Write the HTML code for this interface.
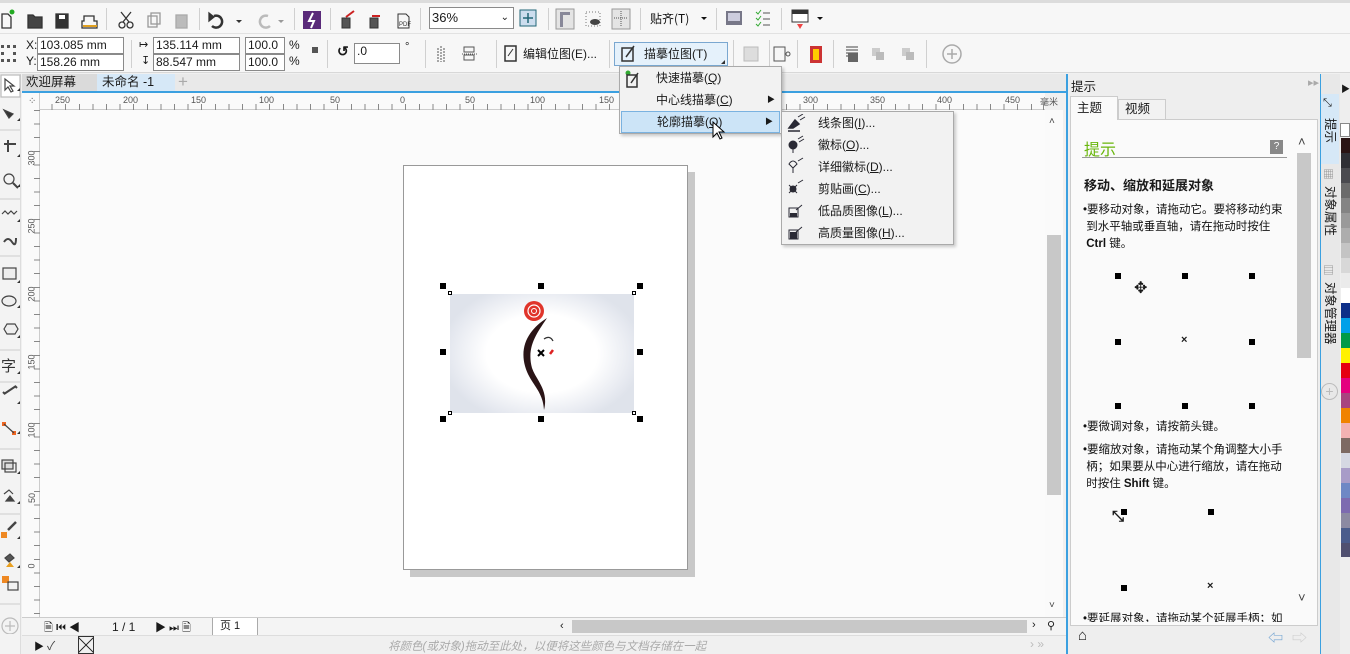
<!DOCTYPE html>
<html><head><meta charset="utf-8"><style>
*{box-sizing:border-box;margin:0;padding:0}
body{width:1350px;height:654px;overflow:hidden;background:#f0f0f0;font-family:"Liberation Sans","Noto Sans CJK SC",sans-serif;font-size:12px;color:#1a1a1a;position:relative}
.a{position:absolute}
.sep{position:absolute;width:1px;background:#d0d0d0}
.inp{position:absolute;background:#fff;border:1px solid #8a8a8a;height:17px;font-size:12px;line-height:15px;padding-left:2px}
.sq{position:absolute;width:6px;height:6px;background:#000}
.rt{position:absolute;font-size:9px;color:#555}
.vt{position:absolute;font-size:9px;color:#555;transform:rotate(-90deg);transform-origin:center}
.mi{position:absolute;left:0;width:100%;height:22px;line-height:22px;font-size:12px}
.sw{position:absolute;left:1341px;width:9px;height:15px}
.ht{position:absolute;font-size:11.5px;line-height:17px;color:#111}
.vtab{position:absolute;left:1322px;width:16px;font-size:12.5px;writing-mode:vertical-rl;text-orientation:sideways;line-height:16px}
</style></head><body>
<div class="a" style="left:0;top:0;width:1350px;height:3px;background:#dcdcdc"></div>
<div class="a" style="left:0;top:3px;width:1350px;height:31px;background:#f7f7f7;border-bottom:1px solid #e2e2e2"></div>
<div class="a" style="left:0;top:34px;width:1350px;height:39px;background:#f7f7f7;border-bottom:1px solid #d8d8d8"></div>
<svg class="a" style="left:0;top:6px" width="850" height="26">
<g fill="none" stroke="#333" stroke-width="1.3">
<path d="M2 8h6l3 3v11H2z"/><circle cx="12" cy="6" r="2.5" fill="#2a2" stroke="none"/>
<path d="M28 9h5l2 2h7v11H28z" fill="#444"/>
<rect x="56" y="8" width="12" height="14" fill="#333"/><rect x="59" y="9" width="6" height="4" fill="#fff" stroke="none"/>
<path d="M84 10h10v5h3v7H82v-7h2z"/><path d="M83 20h14" stroke="#e0a020" stroke-width="2"/>
<circle cx="122" cy="19" r="3"/><circle cx="130" cy="19" r="3"/><path d="M123 16l8-10M129 16l-8-10"/>
<rect x="148" y="10" width="9" height="11" stroke="#999"/><rect x="151" y="7" width="9" height="11" stroke="#999"/>
<rect x="176" y="9" width="11" height="13" fill="#bbb" stroke="#aaa"/>
<path d="M214 10a6 6 0 1 1 -2 10" stroke-width="2.5"/><path d="M209 7l5 4 -5 4z" fill="#333"/>
<path d="M236 14l3 3 3-3z" fill="#333" stroke="none"/>
<path d="M268 10a6 6 0 1 0 2 10" stroke="#bbb" stroke-width="2.5"/><path d="M278 14l3 3 3-3z" fill="#999" stroke="none"/>
</g>
<rect x="303" y="5" width="18" height="18" fill="#5a2a7a"/><path d="M313 7l-4 8h5l-3 7" stroke="#fff" stroke-width="2" fill="none"/>
<g stroke="#333" fill="none"><rect x="342" y="12" width="8" height="10" fill="#555"/><path d="M346 11l8-6" stroke="#c22" stroke-width="2"/>
<rect x="370" y="12" width="8" height="10" fill="#555"/><path d="M372 10h8" stroke="#c22" stroke-width="2"/>
<path d="M398 8h8l3 3v11h-11z"/><text x="399" y="20" font-size="6" fill="#333" stroke="none">PDF</text></g>
</svg>
<div class="sep" style="left:106px;top:8px;height:22px"></div>
<div class="sep" style="left:199px;top:8px;height:22px"></div>
<div class="sep" style="left:294px;top:8px;height:22px"></div>
<div class="sep" style="left:330px;top:8px;height:22px"></div>
<div class="sep" style="left:420px;top:8px;height:22px"></div>
<div class="inp" style="left:429px;top:7px;width:85px;height:22px;line-height:20px;font-size:13px">36%<span style="position:absolute;right:4px;top:0;font-size:10px">&#8964;</span></div>
<svg class="a" style="left:518px;top:8px" width="330" height="24">
<rect x="2" y="2" width="16" height="16" fill="#cde" stroke="#267"/><path d="M10 5v10M5 10h10" stroke="#267" stroke-width="1.5"/>
<rect x="38" y="1" width="18" height="20" fill="#e4e4e4" stroke="#999"/><path d="M42 4h10v3h-7v12h-3z" fill="#889"/>
<rect x="68" y="4" width="14" height="14" fill="none" stroke="#777" stroke-dasharray="1 2"/><ellipse cx="77" cy="14" rx="5" ry="3" fill="#444"/>
<rect x="94" y="1" width="18" height="20" fill="#e4e4e4" stroke="#999"/><path d="M103 3v16M96 10h14" stroke="#555" stroke-dasharray="1 1"/>
<text x="132" y="15" font-size="12" fill="#111" font-family="Noto Sans CJK SC">贴齐(T)</text><path d="M183 9l3 3 3-3z" fill="#111"/>
<rect x="208" y="3" width="16" height="14" fill="#778" /><rect x="210" y="5" width="12" height="8" fill="#ccd"/>
<path d="M238 4l2 2 3-4M238 10l2 2 3-4M238 16l2 2 3-4" stroke="#3a3" fill="none"/><path d="M245 5h7M245 11h7M245 17h7" stroke="#555"/>
<rect x="274" y="2" width="16" height="12" fill="#fff" stroke="#333"/><rect x="274" y="2" width="16" height="4" fill="#333"/><path d="M279 16l3 5 3-5z" fill="#e44"/><path d="M299 9l3 3 3-3z" fill="#111"/>
</svg>
<div class="sep" style="left:548px;top:8px;height:22px"></div>
<div class="sep" style="left:640px;top:8px;height:22px"></div>
<div class="sep" style="left:716px;top:8px;height:22px"></div>
<div class="sep" style="left:781px;top:8px;height:22px"></div>
<svg class="a" style="left:0;top:42px" width="24" height="24"><g fill="#555"><rect x="1" y="3" width="3" height="3"/><rect x="7" y="3" width="3" height="3"/><rect x="13" y="3" width="3" height="3"/><rect x="1" y="10" width="3" height="3"/><rect x="13" y="10" width="3" height="3"/><rect x="1" y="17" width="3" height="3"/><rect x="7" y="17" width="3" height="3"/><rect x="13" y="17" width="3" height="3"/></g></svg>
<div class="a" style="left:26px;top:38px;font-size:12px">X:</div><div class="a" style="left:26px;top:54px;font-size:12px">Y:</div>
<div class="inp" style="left:37px;top:37px;width:87px">103.085 mm</div>
<div class="inp" style="left:37px;top:54px;width:87px">158.26 mm</div>
<div class="sep" style="left:131px;top:40px;height:28px"></div>
<div class="a" style="left:139px;top:38px;font-size:11px">&#8614;</div><div class="a" style="left:141px;top:54px;font-size:11px">&#8615;</div>
<div class="inp" style="left:153px;top:37px;width:87px">135.114 mm</div>
<div class="inp" style="left:153px;top:54px;width:87px">88.547 mm</div>
<div class="inp" style="left:245px;top:37px;width:40px">100.0</div>
<div class="inp" style="left:245px;top:54px;width:40px">100.0</div>
<div class="a" style="left:289px;top:38px">%</div><div class="a" style="left:289px;top:54px">%</div>
<div class="a" style="left:312px;top:47px;width:6px;height:6px;background:#555"></div>
<div class="sep" style="left:327px;top:40px;height:28px"></div>
<div class="a" style="left:337px;top:43px;font-size:14px;font-weight:bold">&#8634;</div>
<div class="inp" style="left:354px;top:43px;width:46px;height:21px">.0</div>
<div class="a" style="left:405px;top:41px;font-size:11px">°</div>
<div class="sep" style="left:425px;top:40px;height:28px"></div>
<svg class="a" style="left:436px;top:44px" width="60" height="20"><path d="M2 4v14M8 4v14M5 2v16" stroke="#555" stroke-dasharray="2 1"/><rect x="28" y="3" width="10" height="5" fill="none" stroke="#555"/><rect x="28" y="11" width="10" height="5" fill="none" stroke="#555"/><path d="M26 10h16" stroke="#555" stroke-dasharray="1 1"/></svg>
<div class="sep" style="left:496px;top:40px;height:28px"></div>
<svg class="a" style="left:503px;top:44px" width="16" height="20"><rect x="2" y="2" width="11" height="15" fill="none" stroke="#333" stroke-width="1.5"/><path d="M5 12l5-7" stroke="#333"/></svg>
<div class="a" style="left:523px;top:45px;font-size:12px">编辑位图(E)...</div>
<div class="sep" style="left:609px;top:40px;height:28px"></div>
<div class="a" style="left:614px;top:42px;width:114px;height:24px;background:#e5f1fb;border:1px solid #7aa7d0"></div>
<svg class="a" style="left:620px;top:44px" width="18" height="20"><rect x="2" y="4" width="11" height="13" fill="none" stroke="#333" stroke-width="1.5"/><path d="M6 13l8-11" stroke="#333" stroke-width="1.5"/></svg>
<div class="a" style="left:644px;top:45px;font-size:12px">描摹位图(T)</div>
<div class="a" style="left:721px;top:60px;width:0;height:0;border-left:4px solid transparent;border-bottom:4px solid #333"></div>
<div class="sep" style="left:733px;top:40px;height:28px"></div>
<svg class="a" style="left:742px;top:44px" width="240" height="22">
<rect x="2" y="3" width="14" height="14" fill="#ddd" stroke="#bbb"/>
<rect x="32" y="3" width="11" height="14" fill="none" stroke="#555"/><circle cx="46" cy="10" r="2" fill="none" stroke="#555"/>
<rect x="68" y="2" width="12" height="17" fill="#c33"/><rect x="71" y="5" width="6" height="11" fill="#fc0"/>
<path d="M104 3h12M104 6h12M104 9h12M104 12h12" stroke="#444"/><rect x="106" y="9" width="10" height="9" fill="#666"/>
<rect x="130" y="4" width="8" height="8" fill="#ccc"/><rect x="134" y="8" width="8" height="8" fill="#bbb"/>
<rect x="160" y="4" width="8" height="8" fill="#ccc"/><rect x="164" y="8" width="8" height="8" fill="#bbb"/>
<circle cx="210" cy="10" r="9" fill="none" stroke="#aaa" stroke-width="1.5"/><path d="M210 5v10M205 10h10" stroke="#aaa" stroke-width="1.5"/>
</svg>
<div class="sep" style="left:769px;top:40px;height:28px"></div>
<div class="sep" style="left:797px;top:40px;height:28px"></div>
<div class="sep" style="left:833px;top:40px;height:28px"></div>
<div class="sep" style="left:926px;top:40px;height:28px"></div>

<div class="a" style="left:0;top:74px;width:21px;height:580px;background:#f3f3f3;border-right:1px solid #ddd"></div>
<svg class="a" style="left:0;top:74px" width="22" height="560">
<g fill="none" stroke="#444" stroke-width="1.2">
<rect x="1" y="1" width="19" height="22" fill="#fff" stroke="#bbb"/><path d="M5 5l0 11 3-3 3 5 2-1-3-5h4z"/>
<path d="M4 36l5 8 4-4z" fill="#333"/>
<path d="M4 70h12M8 66v12" stroke-width="2"/>
<circle cx="9" cy="105" r="5"/><path d="M13 109l5 5" stroke-width="2"/>
<path d="M2 140l3-3 3 3 3-3 3 3 3-3"/><path d="M4 168q4-6 8 0t4-4" stroke-width="2"/>
<rect x="3" y="194" width="13" height="11" fill="#eee"/>
<ellipse cx="9" cy="227" rx="7" ry="5" fill="#eee"/>
<path d="M4 255l3-5h8l3 5-3 5h-8z" fill="#eee"/>
<path d="M4 320l12-8M5 320l-2-2M15 312l2 2" stroke-width="2"/>
<rect x="2" y="348" width="4" height="4" fill="#e62" stroke="none"/><rect x="12" y="357" width="4" height="4" fill="#e62" stroke="none"/><path d="M4 350l10 9"/>
<rect x="2" y="386" width="11" height="9" fill="#ddd"/><rect x="5" y="389" width="11" height="9" fill="none"/>
<path d="M4 420l5-4 4 4" /><path d="M10 422l4 5h-8z" fill="#444"/>
<rect x="1" y="458" width="6" height="6" fill="#e82" stroke="none"/><path d="M8 456l8-8" stroke-width="2.5"/>
<path d="M5 484l5-4 4 4-5 4z" fill="#555"/><path d="M10 488l4 5h-8z" fill="#e9a020" stroke="none"/>
<rect x="2" y="502" width="7" height="7" fill="#e82" stroke="none"/><rect x="8" y="508" width="10" height="8" fill="none"/>
<circle cx="10" cy="552" r="8" stroke="#bbb"/><path d="M10 547v10M5 552h10" stroke="#bbb"/>
</g>
<text x="1" y="297" font-size="15" fill="#333" font-family="Noto Sans CJK SC">字</text>
<g fill="#333"><path d="M17 17l3 0 0-3z"/><path d="M17 47l3 0 0-3z"/><path d="M17 83l3 0 0-3z"/><path d="M17 113l3 0 0-3z"/><path d="M17 148l3 0 0-3z"/><path d="M17 209l3 0 0-3z"/><path d="M17 234l3 0 0-3z"/><path d="M17 264l3 0 0-3z"/><path d="M17 300l3 0 0-3z"/><path d="M17 330l3 0 0-3z"/><path d="M17 360l3 0 0-3z"/><path d="M17 400l3 0 0-3z"/><path d="M17 430l3 0 0-3z"/><path d="M17 465l3 0 0-3z"/><path d="M17 494l3 0 0-3z"/></g>
<g stroke="#ccc"><path d="M0 56h20M0 125h20M0 182h20M0 276h20M0 308h20M0 375h20M0 440h20M0 530h20"/></g>
</svg>

<div class="a" style="left:22px;top:74px;width:1044px;height:19px;background:#e9e9e9;border-bottom:2px solid #3ba0e0"></div>
<div class="a" style="left:22px;top:74px;width:75px;height:17px;background:#dadada;font-size:12.5px;line-height:17px;padding-left:4px">欢迎屏幕</div>
<div class="a" style="left:97px;top:74px;width:78px;height:17px;background:#d6e8f7;font-size:12.5px;line-height:17px;padding-left:5px">未命名 -1</div>
<div class="a" style="left:178px;top:72px;font-size:17px;color:#aaa">+</div>

<div class="a" style="left:22px;top:93px;width:1023px;height:17px;background:#fafafa;border-bottom:1px solid #ccc"></div>
<div class="a" style="left:22px;top:93px;width:18px;height:530px;background:#fafafa;border-right:1px solid #ccc"></div>
<div class="a" style="left:28px;top:96px;font-size:10px;color:#555">⁘</div>
<div class="rt" style="left:55px;top:95px">250</div><div class="rt" style="left:123px;top:95px">200</div><div class="rt" style="left:191px;top:95px">150</div><div class="rt" style="left:259px;top:95px">100</div><div class="rt" style="left:330px;top:95px">50</div><div class="rt" style="left:400px;top:95px">0</div><div class="rt" style="left:465px;top:95px">50</div><div class="rt" style="left:530px;top:95px">100</div><div class="rt" style="left:599px;top:95px">150</div><div class="rt" style="left:803px;top:95px">300</div><div class="rt" style="left:870px;top:95px">350</div><div class="rt" style="left:937px;top:95px">400</div><div class="rt" style="left:1005px;top:95px">450</div><div class="rt" style="left:1040px;top:95px">毫米</div>
<div class="a" style="left:40px;top:104px;width:1005px;height:6px;background:repeating-linear-gradient(90deg,#888 0 1px,transparent 1px 13.6px);background-position:-2px 0"></div>
<div class="a" style="left:34px;top:110px;width:6px;height:510px;background:repeating-linear-gradient(180deg,#888 0 1px,transparent 1px 13.6px)"></div>
<div class="vt" style="left:24px;top:153px">300</div><div class="vt" style="left:24px;top:221px">250</div><div class="vt" style="left:24px;top:289px">200</div><div class="vt" style="left:24px;top:357px">150</div><div class="vt" style="left:24px;top:425px">100</div><div class="vt" style="left:27px;top:493px">50</div><div class="vt" style="left:29px;top:561px">0</div>

<div class="a" style="left:40px;top:110px;width:1005px;height:507px;background:#fbfbfb"></div>
<div class="a" style="left:410px;top:172px;width:285px;height:405px;background:#c8c8c8"></div>
<div class="a" style="left:403px;top:165px;width:285px;height:405px;background:#fff;border:1px solid #999"></div>
<div class="a" style="left:450px;top:294px;width:184px;height:119px;background:radial-gradient(ellipse 55% 60% at 50% 50%,#fff 0,#fff 55%,#e6e9f0 90%,#dfe3eb 100%)"></div>
<svg class="a" style="left:450px;top:294px" width="184" height="119">
<circle cx="84" cy="17" r="10" fill="#e0352b"/><circle cx="84" cy="17" r="6" fill="none" stroke="#fff" stroke-width="1.2"/><circle cx="84" cy="17" r="2.5" fill="none" stroke="#fff" stroke-width="1"/>
<path d="M97 24c-16 10-28 26-22 48 5 18 18 24 19 44 5-20-8-30-12-42-6-22 6-36 15-50z" fill="#2a1416"/>
<path d="M94 45q6-4 9 2" stroke="#333" stroke-width="1.3" fill="none"/><path d="M103 56l-3 4" stroke="#d22" stroke-width="2.5"/>
<path d="M88 56l6 6M94 56l-6 6" stroke="#000" stroke-width="2"/>
</svg>
<div class="sq" style="left:440px;top:283px"></div><div class="sq" style="left:538px;top:283px"></div><div class="sq" style="left:637px;top:283px"></div>
<div class="sq" style="left:440px;top:349px"></div><div class="sq" style="left:637px;top:349px"></div>
<div class="sq" style="left:440px;top:416px"></div><div class="sq" style="left:538px;top:416px"></div><div class="sq" style="left:637px;top:416px"></div>
<div class="a" style="left:448px;top:291px;width:4px;height:4px;border:1px solid #000;background:#fff"></div>
<div class="a" style="left:632px;top:291px;width:4px;height:4px;border:1px solid #000;background:#fff"></div>
<div class="a" style="left:448px;top:411px;width:4px;height:4px;border:1px solid #000;background:#fff"></div>
<div class="a" style="left:632px;top:411px;width:4px;height:4px;border:1px solid #000;background:#fff"></div>

<div class="a" style="left:1045px;top:110px;width:18px;height:507px;background:#fafafa"></div>
<div class="a" style="left:1049px;top:116px;font-size:10px;color:#444">&#708;</div>
<div class="a" style="left:1047px;top:235px;width:14px;height:260px;background:#c8c8c8"></div>
<div class="a" style="left:1049px;top:600px;font-size:10px;color:#444">&#709;</div>

<div class="a" style="left:22px;top:617px;width:1044px;height:18px;background:#f4f4f4;border-top:1px solid #ccc"></div>
<div class="a" style="left:44px;top:619px;font-size:11px">&#128462; &#x23EE; &#9664;</div>
<div class="a" style="left:112px;top:620px;font-size:12px">1 / 1</div>
<div class="a" style="left:155px;top:619px;font-size:11px">&#9654; &#x23ED; &#128462;</div>
<div class="a" style="left:212px;top:618px;width:46px;height:17px;border-left:1px solid #aaa;border-right:1px solid #aaa;background:#fff;padding-left:7px;font-size:11px;line-height:16px">页 1</div>
<div class="a" style="left:560px;top:620px;font-size:11px">&#8249;</div>
<div class="a" style="left:572px;top:620px;width:455px;height:13px;background:#c8c8c8"></div>
<div class="a" style="left:1032px;top:619px;font-size:11px">&#8250;</div>
<div class="a" style="left:1047px;top:619px;font-size:11px">&#9906;</div>

<div class="a" style="left:22px;top:635px;width:1044px;height:19px;background:#f0f0f0;border-top:1px solid #ddd"></div>
<div class="a" style="left:34px;top:638px;font-size:10px">&#9654;</div>
<div class="a" style="left:47px;top:637px;font-size:12px;color:#444">&#10003;</div>
<div class="a" style="left:78px;top:636px;width:16px;height:18px;border:1px solid #333;background:linear-gradient(45deg,transparent 47%,#333 48%,#333 52%,transparent 53%),linear-gradient(-45deg,transparent 47%,#333 48%,#333 52%,transparent 53%)"></div>
<div class="a" style="left:388px;top:638px;font-size:11.5px;color:#aaa;font-style:italic">将颜色(或对象)拖动至此处，以便将这些颜色与文档存储在一起</div>
<div class="a" style="left:1030px;top:637px;font-size:12px;color:#bbb">› »</div>

<div class="a" style="left:1066px;top:74px;width:2px;height:580px;background:#3ba0e0"></div>
<div class="a" style="left:1068px;top:74px;width:252px;height:580px;background:#eeeeee"></div>
<div class="a" style="left:1071px;top:76px;font-size:12.5px">提示</div>
<div class="a" style="left:1308px;top:76px;font-size:11px;color:#aaa">▸▸ ✕</div>
<div class="a" style="left:1070px;top:96px;width:48px;height:24px;background:#fafafa;border:1px solid #ccc;border-bottom:none;font-size:12.5px;line-height:22px;padding-left:6px;z-index:2">主题</div>
<div class="a" style="left:1118px;top:99px;width:48px;height:21px;background:#f2f2f2;border:1px solid #ccc;font-size:12.5px;line-height:19px;padding-left:6px">视频</div>
<div class="a" style="left:1070px;top:119px;width:248px;height:507px;background:#fafafa;border:1px solid #ccc"></div>
<div class="a" style="left:1084px;top:136px;font-size:16px;color:#69b60c">提示</div>
<div class="a" style="left:1270px;top:140px;width:13px;height:14px;background:#888;color:#fff;font-size:10px;text-align:center;line-height:14px">?</div>
<div class="a" style="left:1082px;top:157px;width:205px;height:1px;background:#999"></div>
<div class="a" style="left:1084px;top:175px;font-size:13px;font-weight:bold">移动、缩放和延展对象</div>
<div class="ht" style="left:1083px;top:202px">•要移动对象，请拖动它。要将移动约束<br>&nbsp;到水平轴或垂直轴，请在拖动时按住<br>&nbsp;<b>Ctrl</b> 键。</div>
<div class="sq" style="left:1115px;top:273px"></div><div class="sq" style="left:1182px;top:273px"></div><div class="sq" style="left:1249px;top:273px"></div>
<div class="sq" style="left:1115px;top:339px"></div><div class="a" style="left:1181px;top:334px;font-size:11px;font-weight:bold">×</div><div class="sq" style="left:1249px;top:339px"></div>
<div class="sq" style="left:1115px;top:403px"></div><div class="sq" style="left:1182px;top:403px"></div><div class="sq" style="left:1249px;top:403px"></div>
<div class="a" style="left:1134px;top:278px;font-size:16px">✥</div>
<div class="ht" style="left:1083px;top:419px">•要微调对象，请按箭头键。</div>
<div class="ht" style="left:1083px;top:442px">•要缩放对象，请拖动某个角调整大小手<br>&nbsp;柄；如果要从中心进行缩放，请在拖动<br>&nbsp;时按住 <b>Shift</b> 键。</div>
<div class="sq" style="left:1121px;top:509px"></div><div class="sq" style="left:1208px;top:509px"></div>
<div class="sq" style="left:1121px;top:585px"></div><div class="a" style="left:1207px;top:580px;font-size:11px;font-weight:bold">×</div>
<div class="a" style="left:1112px;top:508px;font-size:15px;font-weight:bold">⤡</div>
<div class="ht" style="left:1083px;top:611px;height:11px;overflow:hidden">•要延展对象，请拖动某个延展手柄；如</div>
<div class="a" style="left:1298px;top:134px;font-size:13px;color:#444">&#708;</div>
<div class="a" style="left:1297px;top:153px;width:14px;height:205px;background:#c8c8c8"></div>
<div class="a" style="left:1298px;top:590px;font-size:13px;color:#444">&#709;</div>
<div class="a" style="left:1078px;top:627px;font-size:15px">⌂</div>
<div class="a" style="left:1268px;top:627px;font-size:15px;color:#6a9fd0">⇦</div><div class="a" style="left:1292px;top:627px;font-size:15px;color:#ccc">⇨</div>

<div class="a" style="left:1320px;top:74px;width:20px;height:580px;background:#e8e8e8;border-left:1px solid #3ba0e0"></div>
<div class="a" style="left:1321px;top:94px;width:18px;height:70px;background:#d6e8f7"></div>
<div class="a" style="left:1323px;top:97px;font-size:11px">⤡</div>
<div class="vtab" style="top:118px">提示</div>
<div class="a" style="left:1323px;top:166px;font-size:11px;color:#888">▦</div>
<div class="vtab" style="top:186px">对象属性</div>
<div class="a" style="left:1323px;top:262px;font-size:11px;color:#888">▤</div>
<div class="vtab" style="top:282px">对象管理器</div>
<div class="a" style="left:1321px;top:383px;width:17px;height:17px;border:1px solid #bbb;border-radius:50%;text-align:center;line-height:15px;color:#bbb;font-size:14px">+</div>

<div class="a" style="left:1340px;top:74px;width:10px;height:580px;background:#eee"></div>
<div class="a" style="left:1341px;top:82px;font-size:9px">▶</div>
<div class="a" style="left:1340px;top:123px;width:10px;height:14px;background:#fff;border:1px solid #888"></div>
<div class="sw" style="top:138px;background:#2a1414"></div><div class="sw" style="top:153px;background:#2f2f35"></div><div class="sw" style="top:168px;background:#4a4a4f"></div><div class="sw" style="top:183px;background:#6b6b6b"></div><div class="sw" style="top:198px;background:#848484"></div><div class="sw" style="top:213px;background:#9a9a9a"></div><div class="sw" style="top:228px;background:#adadad"></div><div class="sw" style="top:243px;background:#c4c4c4"></div><div class="sw" style="top:258px;background:#d8d8d8"></div><div class="sw" style="top:273px;background:#ebebeb"></div><div class="sw" style="top:288px;background:#fff"></div><div class="sw" style="top:303px;background:#0d2f88"></div><div class="sw" style="top:318px;background:#00a0e9"></div><div class="sw" style="top:333px;background:#009b48"></div><div class="sw" style="top:348px;background:#fff100"></div><div class="sw" style="top:363px;background:#e50012"></div><div class="sw" style="top:378px;background:#e4007f"></div><div class="sw" style="top:393px;background:#a8447f"></div><div class="sw" style="top:408px;background:#f08300"></div><div class="sw" style="top:423px;background:#f2b2b2"></div><div class="sw" style="top:438px;background:#7d6a63"></div><div class="sw" style="top:453px;background:#d5d8e3"></div><div class="sw" style="top:468px;background:#a89cc8"></div><div class="sw" style="top:483px;background:#6e88c5"></div><div class="sw" style="top:498px;background:#7d6bb0"></div><div class="sw" style="top:513px;background:#8c8aa2"></div><div class="sw" style="top:528px;background:#4a5c8c"></div><div class="sw" style="top:543px;background:#505070;height:14px"></div>

<div class="a" style="left:619px;top:66px;width:163px;height:68px;background:#f2f2f2;border:1px solid #aaa;box-shadow:2px 2px 3px rgba(0,0,0,.2)">
<svg class="a" style="left:4px;top:3px" width="18" height="18"><circle cx="4" cy="3" r="2.5" fill="#3a3"/><rect x="3" y="5" width="10" height="12" fill="none" stroke="#333" stroke-width="1.5"/><path d="M7 13l7-10" stroke="#333" stroke-width="1.5"/></svg>
<div class="mi" style="top:0;padding-left:36px">快速描摹(<u>Q</u>)</div>
<div class="mi" style="top:22px;padding-left:36px">中心线描摹(<u>C</u>)<span style="position:absolute;right:6px;font-size:8px">▶</span></div>
<div class="mi" style="top:44px;left:1px;width:159px;background:#cce4f7;border:1px solid #7ab2e0;padding-left:35px;line-height:20px">轮廓描摹(<u>O</u>)<span style="position:absolute;right:6px;font-size:8px">▶</span></div>
</div>
<svg class="a" style="left:712px;top:121px" width="14" height="20"><path d="M1 1v15l4-4 3 6 2-1-3-6h5z" fill="#fff" stroke="#000"/></svg>
<div class="a" style="left:781px;top:111px;width:173px;height:134px;background:#f2f2f2;border:1px solid #aaa;box-shadow:2px 2px 3px rgba(0,0,0,.2)">
<svg class="a" style="left:4px;top:2px" width="20" height="132">
<g fill="#2a2a35" stroke="#2a2a35"><path d="M3 14l6-8 4 4-6 4zM2 17h12" stroke-width="1.5"/><path d="M12 3l5-3M14 6l5-3" fill="none"/>
<circle cx="7" cy="31" r="4"/><path d="M7 35v4" /><path d="M12 25l5-3M13 28l5-3" fill="none"/>
<path d="M3 50q4-6 8 0l-4 4z" fill="none"/><path d="M7 54v5"/><path d="M12 47l5-3" fill="none"/>
<circle cx="7" cy="75" r="3"/><path d="M3 71l8 8M11 71l-8 8" fill="none"/><path d="M12 69l5-3" fill="none"/>
<rect x="3" y="94" width="9" height="9" fill="none"/><rect x="4" y="99" width="7" height="4" stroke="none"/><path d="M10 96l6-5" fill="none"/>
<rect x="3" y="116" width="9" height="9" fill="none"/><rect x="4" y="118" width="7" height="7" stroke="none"/><path d="M10 118l6-5" fill="none"/></g>
</svg>
<div class="mi" style="top:0;padding-left:36px">线条图(<u>I</u>)...</div>
<div class="mi" style="top:22px;padding-left:36px">徽标(<u>O</u>)...</div>
<div class="mi" style="top:44px;padding-left:36px">详细徽标(<u>D</u>)...</div>
<div class="mi" style="top:66px;padding-left:36px">剪贴画(<u>C</u>)...</div>
<div class="mi" style="top:88px;padding-left:36px">低品质图像(<u>L</u>)...</div>
<div class="mi" style="top:110px;padding-left:36px">高质量图像(<u>H</u>)...</div>
</div>
</body></html>
